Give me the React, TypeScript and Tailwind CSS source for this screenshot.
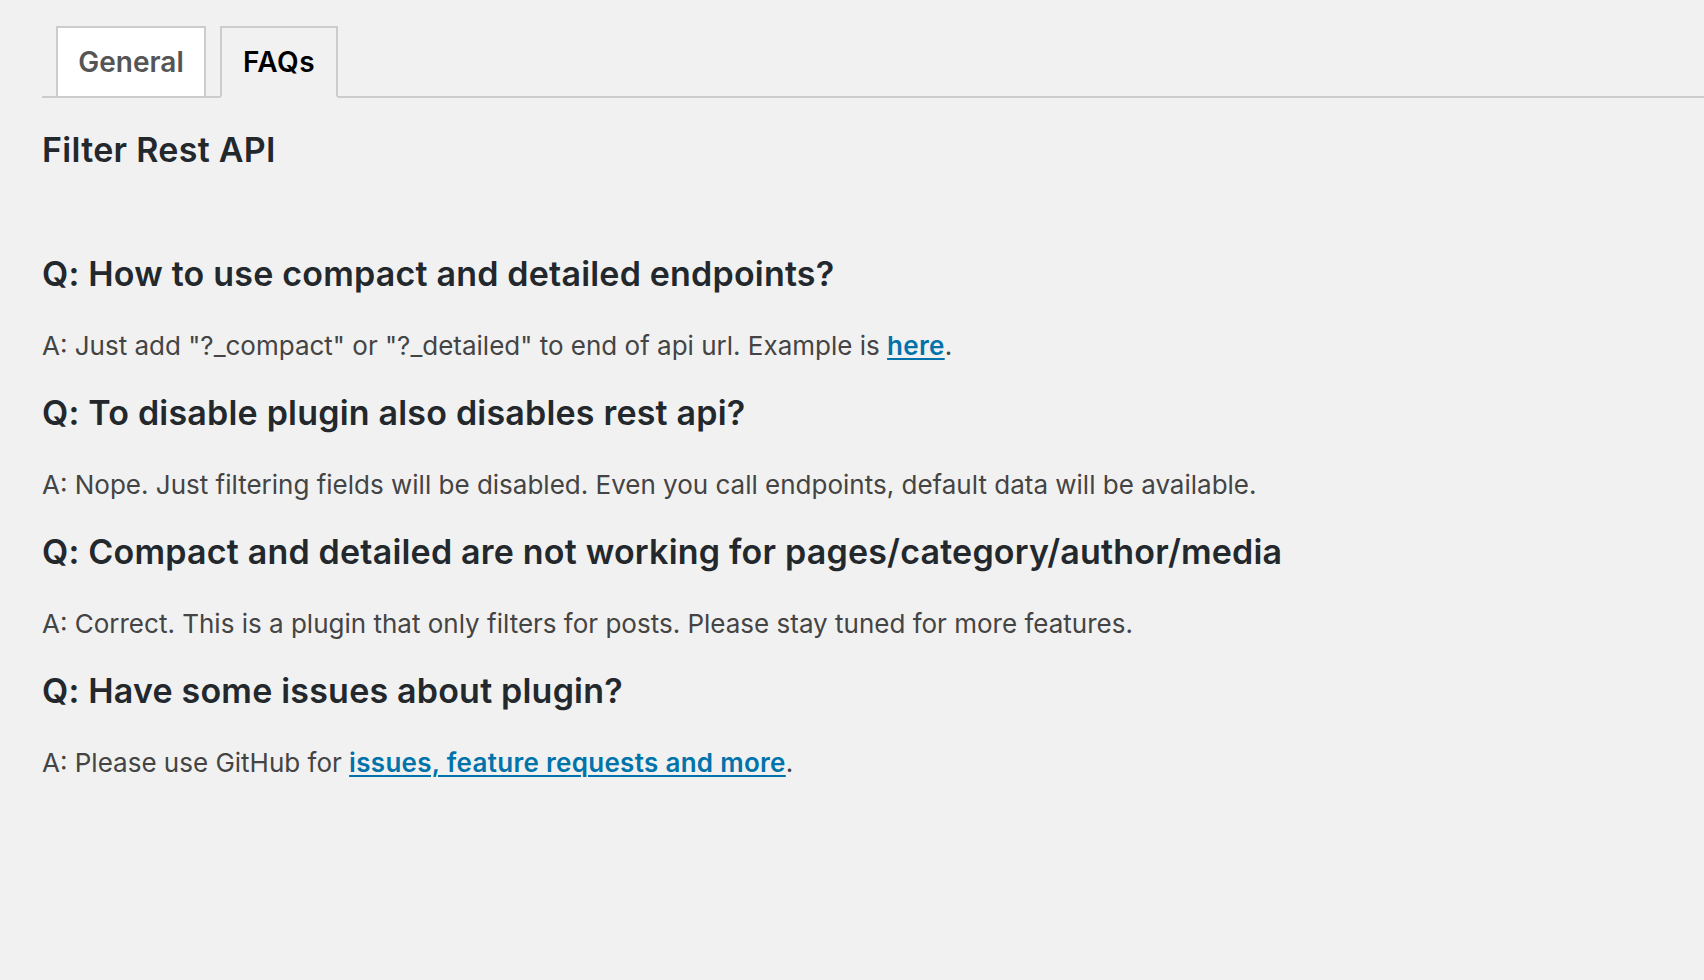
import React from "react";

const linkCls =
  "font-semibold tracking-[0.3px] text-[#0073aa] underline decoration-2 underline-offset-[3px]";

const faqs: { q: string; a: React.ReactNode }[] = [
  {
    q: "Q: How to use compact and detailed endpoints?",
    a: (
      <>
        A: Just add "?_compact" or "?_detailed" to end of api url. Example is{" "}
        <a href="#" className={linkCls}>
          here
        </a>
        .
      </>
    ),
  },
  {
    q: "Q: To disable plugin also disables rest api?",
    a: "A: Nope. Just filtering fields will be disabled. Even you call endpoints, default data will be available.",
  },
  {
    q: "Q: Compact and detailed are not working for pages/category/author/media",
    a: "A: Correct. This is a plugin that only filters for posts. Please stay tuned for more features.",
  },
  {
    q: "Q: Have some issues about plugin?",
    a: (
      <>
        A: Please use GitHub for{" "}
        <a href="#" className={linkCls}>
          issues, feature requests and more
        </a>
        .
      </>
    ),
  },
];

export default function App() {
  return (
    <div
      className="min-h-[980px] w-full bg-[#f1f1f1] pl-[42px]"
      style={{ fontFamily: "Inter, 'Noto Sans', sans-serif" }}
    >
      <div className="flex items-end border-b-2 border-[#cccccc] pt-[26px]">
        <div className="-mb-[2px] ml-[14px] w-[150px] border-2 border-[#cccccc] bg-white py-[10px] text-center text-[28px] font-semibold leading-[48px] text-[#555555]">
          General
        </div>
        <div className="-mb-[2px] ml-[14px] w-[118px] border-2 border-[#cccccc] border-b-[#f1f1f1] bg-[#f1f1f1] py-[10px] text-center text-[28px] font-semibold leading-[48px] tracking-[0.5px] text-black">
          FAQs
        </div>
      </div>
      <h2 className="mt-[34px] text-[34px] font-semibold leading-[36px] tracking-[0.3px] text-[#23282d]">
        Filter Rest API
      </h2>
      <div className="mt-[88px] flex flex-col gap-[30px]">
        {faqs.map((f, i) => (
          <div key={i} className="flex flex-col gap-[34px]">
            <h2 className="text-[34px] font-semibold leading-[36px] tracking-[0.2px] text-[#23282d]">{f.q}</h2>
            <p className="text-[26px] leading-[39px] text-[#444444]">{f.a}</p>
          </div>
        ))}
      </div>
    </div>
  );
}
